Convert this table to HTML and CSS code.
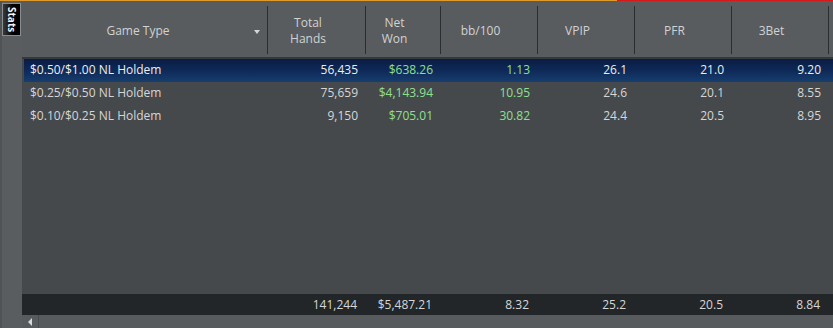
FILE: index.html
```html
<!DOCTYPE html>
<html>
<head>
<meta charset="utf-8">
<link rel="stylesheet" href="styles.css">
</head>
<body>
<div class="topline"><div class="tl-orange"></div><div class="tl-red"></div></div>
<div class="frame">
  <aside class="sidebar">
    <div class="tab"><span class="tab-text">Stats</span></div>
  </aside>
  <main class="grid">
    <div class="head">
      <div class="hc hc-game"><span>Game Type</span><span class="sort"></span></div>
      <div class="hc"><span>Total<br>Hands</span></div>
      <div class="hc"><span>Net<br>Won</span></div>
      <div class="hc"><span>bb/100</span></div>
      <div class="hc"><span>VPIP</span></div>
      <div class="hc"><span>PFR</span></div>
      <div class="hc"><span>3Bet</span></div>
      <div class="hc hc-fill"></div>
    </div>
    <div class="rows">
      <div class="row selected">
        <div class="c c-game">$0.50/$1.00 NL Holdem</div>
        <div class="c">56,435</div>
        <div class="c green">$638.26</div>
        <div class="c green">1.13</div>
        <div class="c">26.1</div>
        <div class="c">21.0</div>
        <div class="c">9.20</div>
      </div>
      <div class="row">
        <div class="c c-game">$0.25/$0.50 NL Holdem</div>
        <div class="c">75,659</div>
        <div class="c green">$4,143.94</div>
        <div class="c green">10.95</div>
        <div class="c">24.6</div>
        <div class="c">20.1</div>
        <div class="c">8.55</div>
      </div>
      <div class="row">
        <div class="c c-game">$0.10/$0.25 NL Holdem</div>
        <div class="c">9,150</div>
        <div class="c green">$705.01</div>
        <div class="c green">30.82</div>
        <div class="c">24.4</div>
        <div class="c">20.5</div>
        <div class="c">8.95</div>
      </div>
    </div>
    <div class="totals">
      <div class="c c-game"></div>
      <div class="c">141,244</div>
      <div class="c">$5,487.21</div>
      <div class="c">8.32</div>
      <div class="c">25.2</div>
      <div class="c">20.5</div>
      <div class="c">8.84</div>
    </div>
    <div class="hscroll">
      <div class="arrow-btn"><span class="arrow-left"></span></div>
      <div class="track"></div>
    </div>
  </main>
</div>
</body>
</html>
```
FILE: styles.css
```css
* { box-sizing: border-box; }
html, body {
  margin: 0;
  padding: 0;
  width: 833px;
  height: 328px;
  overflow: hidden;
  background: #585c5f;
  font-family: "Open Sans", "Noto Sans", sans-serif;
  font-size: 12px;
  color: #d6d6d6;
}
.topline {
  display: flex;
  height: 1px;
}
.tl-orange { width: 617px; background: #e09a2c; }
.tl-red { flex: 1; background: #d41a1a; }

.frame {
  display: flex;
  height: 327px;
}
.sidebar {
  width: 22px;
  background: #595d60;
  border-left: 2px solid #4f5356;
  padding: 2px 0 0 0;
}
.tab {
  width: 19px;
  height: 33px;
  border: 1px solid #8a8d90;
  background: linear-gradient(to right, #3a3a3a 0%, #000 60%, #000 100%);
  display: flex;
  align-items: center;
  justify-content: center;
}
.tab-text {
  writing-mode: vertical-rl;
  color: #f4f4f4;
  font-size: 10px;
  font-weight: 700;
  line-height: 1;
}

.grid {
  flex: 1;
  display: flex;
  flex-direction: column;
  min-width: 0;
}
.head {
  height: 58px;
  display: grid;
  grid-template-columns: 246px 98px 75px 97px 97px 97px 97px 1fr;
  background: #585c5f;
  border-bottom: 2px solid #35393c;
}
.hc {
  margin: 5px 0 3px;
  padding-top: 2px;
  border-right: 1px solid #2b2e30;
  display: flex;
  align-items: center;
  justify-content: center;
  padding-right: 17px;
  text-align: center;
  line-height: 16px;
  color: #d2d2d2;
}
.hc-fill { border-right: none; }
.hc-game {
  position: relative;
  padding-right: 13px;
}
.sort {
  position: absolute;
  right: 7px;
  top: 24px;
  width: 0;
  height: 0;
  border-left: 3.5px solid transparent;
  border-right: 3.5px solid transparent;
  border-top: 4px solid #d6d6d6;
}

.rows {
  flex: 1;
  background: #45494c;
  padding-left: 2px;
}
.row, .totals {
  display: grid;
  grid-template-columns: 244px 98px 75px 97px 97px 97px 97px 1fr;
  height: 23px;
  align-items: center;
}
.row { padding-bottom: 2px; }
.row.selected {
  background: linear-gradient(to bottom, #091c45 0%, #0f2b5a 55%, #163e6e 100%);
  color: #eeeeee;
}
.c {
  text-align: right;
  padding-right: 8px;
  white-space: nowrap;
}
.c-game {
  text-align: left;
  padding-left: 6px;
}
.green { color: #8fe08c; }

.totals {
  height: 21px;
  background: #222629;
  padding-left: 2px;
  color: #d6d6d6;
}
.totals .c { padding-right: 9px; }

.hscroll {
  height: 13px;
  display: flex;
  background: #575b5e;
}
.arrow-btn {
  width: 17px;
  border-right: 1px solid #474b4e;
  display: flex;
  align-items: center;
  justify-content: center;
}
.arrow-left {
  width: 0;
  height: 0;
  border-top: 4px solid transparent;
  border-bottom: 4px solid transparent;
  border-right: 4px solid #d8d8d8;
}
.track { flex: 1; }
```
